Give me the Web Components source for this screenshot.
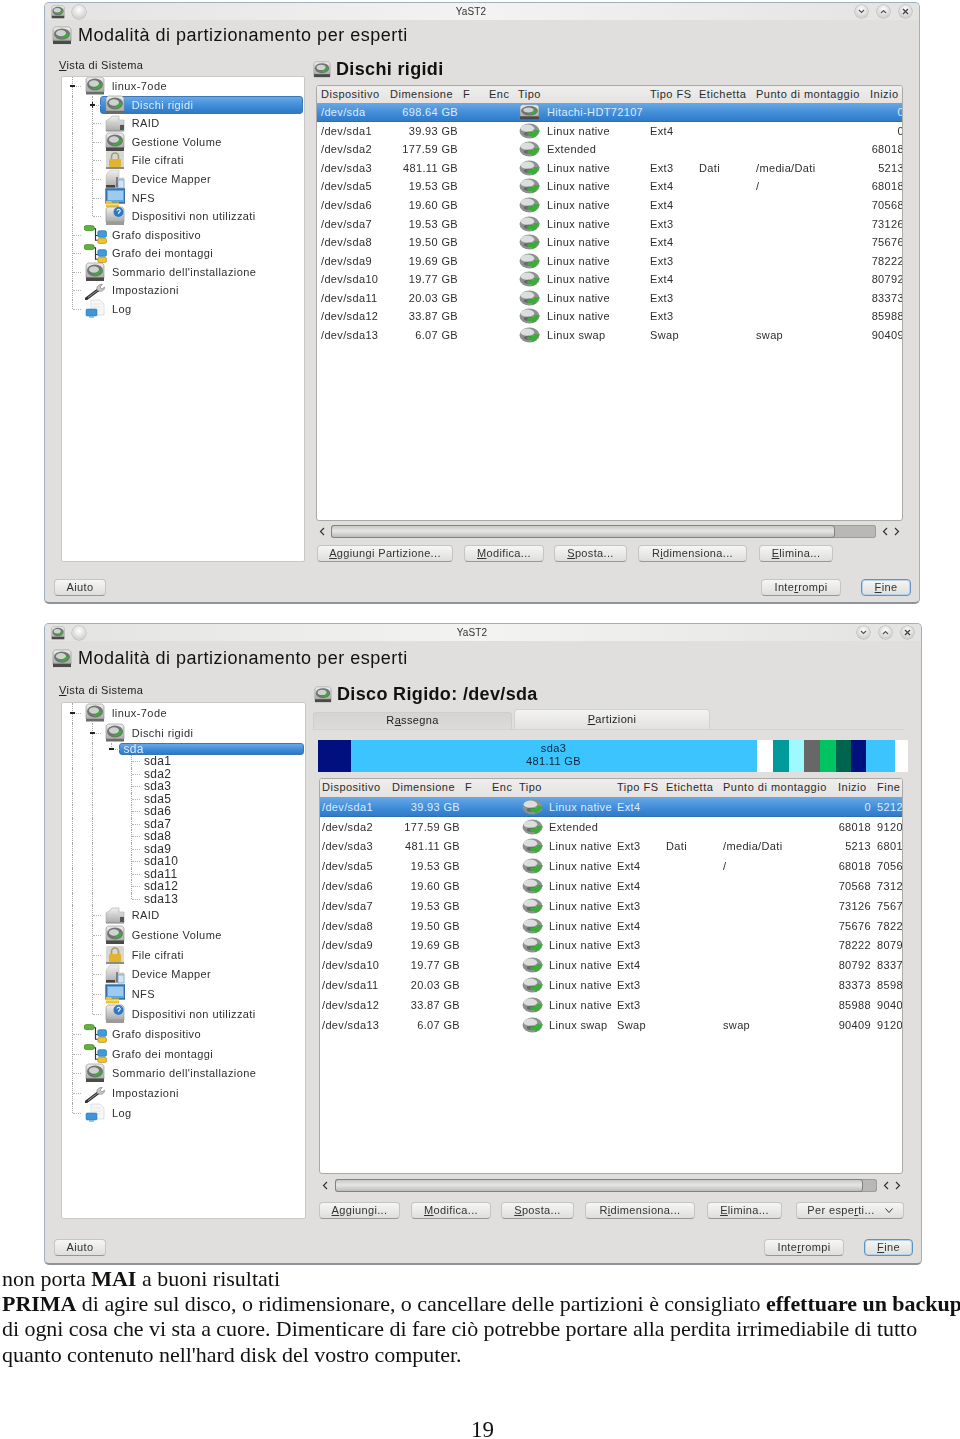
<!DOCTYPE html>
<html lang="it">
<head>
<meta charset="utf-8">
<title>YaST2</title>
<style>
html, body { margin: 0; background: #fff; overflow: hidden; }
doc-page { --ui: "Liberation Sans", Arial, sans-serif; }
.w1 { width: 876px; height: 602px; margin-top: 2px; }
.w2 { width: 878px; height: 642px; margin-top: 19px; }
</style>
</head>
<body>
<doc-page>
  <yast-window class="w1" title="Modalità di partizionamento per esperti" head-pad="2" label-pad="11" label-h="28" tree-w="244" gap="8" foot-pad="17">
    <yast-tree slot="tree" row="18.55">
      <tree-row toggle="minus" icon="disk">linux-7ode</tree-row>
      <tree-row guides="1" toggle="plus" icon="disk" selected>Dischi rigidi</tree-row>
      <tree-row guides="1" icon="raid">RAID</tree-row>
      <tree-row guides="1" icon="volume">Gestione Volume</tree-row>
      <tree-row guides="1" icon="lock">File cifrati</tree-row>
      <tree-row guides="1" icon="mapper">Device Mapper</tree-row>
      <tree-row guides="1" icon="nfs">NFS</tree-row>
      <tree-row guides="1" icon="unused" last>Dispositivi non utilizzati</tree-row>
      <tree-row icon="graph">Grafo dispositivo</tree-row>
      <tree-row icon="graph">Grafo dei montaggi</tree-row>
      <tree-row icon="volume">Sommario dell'installazione</tree-row>
      <tree-row icon="wrench">Impostazioni</tree-row>
      <tree-row icon="log" last>Log</tree-row>
    </yast-tree>
    <section-head style="height:37px;padding-bottom:4px">Dischi rigidi</section-head>
    <part-table source="disks" style="height:436px;margin-left:3px;width:587px"></part-table>
    <h-scroll thumb="504" track="545" lead="6" style="margin:3px 0 7px 3px;width:586px"></h-scroll>
    <div style="display:flex;margin-left:4px">
      <yast-btn style="width:136px"><u>A</u>ggiungi Partizione...</yast-btn>
      <yast-btn style="width:80px;margin-left:11px"><u>M</u>odifica...</yast-btn>
      <yast-btn style="width:73px;margin-left:10px"><u>S</u>posta...</yast-btn>
      <yast-btn style="width:109px;margin-left:11px">R<u>i</u>dimensiona...</yast-btn>
      <yast-btn style="width:74px;margin-left:12px"><u>E</u>limina...</yast-btn>
    </div>
    <yast-btn slot="help" style="width:52px">Aiuto</yast-btn>
    <yast-btn slot="actions" style="width:80px">Inte<u>r</u>rompi</yast-btn>
    <yast-btn slot="actions" primary style="width:50px"><u>F</u>ine</yast-btn>
  </yast-window>

  <yast-window class="w2" title="Modalità di partizionamento per esperti" head-pad="6" label-pad="15" label-h="33" tree-w="245" gap="7" foot-pad="20">
    <yast-tree slot="tree" row="19.8">
      <tree-row toggle="minus" icon="disk">linux-7ode</tree-row>
      <tree-row guides="1" toggle="minus" icon="disk">Dischi rigidi</tree-row>
      <tree-row guides="11" toggle="minus" plain selected h="12.5" last>sda</tree-row>
      <tree-row guides="110" plain h="12.5">sda1</tree-row>
      <tree-row guides="110" plain h="12.5">sda2</tree-row>
      <tree-row guides="110" plain h="12.5">sda3</tree-row>
      <tree-row guides="110" plain h="12.5">sda5</tree-row>
      <tree-row guides="110" plain h="12.5">sda6</tree-row>
      <tree-row guides="110" plain h="12.5">sda7</tree-row>
      <tree-row guides="110" plain h="12.5">sda8</tree-row>
      <tree-row guides="110" plain h="12.5">sda9</tree-row>
      <tree-row guides="110" plain h="12.5">sda10</tree-row>
      <tree-row guides="110" plain h="12.5">sda11</tree-row>
      <tree-row guides="110" plain h="12.5">sda12</tree-row>
      <tree-row guides="110" plain h="12.5" last>sda13</tree-row>
      <tree-row guides="1" icon="raid">RAID</tree-row>
      <tree-row guides="1" icon="volume">Gestione Volume</tree-row>
      <tree-row guides="1" icon="lock">File cifrati</tree-row>
      <tree-row guides="1" icon="mapper">Device Mapper</tree-row>
      <tree-row guides="1" icon="nfs">NFS</tree-row>
      <tree-row guides="1" icon="unused" last>Dispositivi non utilizzati</tree-row>
      <tree-row icon="graph">Grafo dispositivo</tree-row>
      <tree-row icon="graph">Grafo dei montaggi</tree-row>
      <tree-row icon="volume">Sommario dell'installazione</tree-row>
      <tree-row icon="wrench">Impostazioni</tree-row>
      <tree-row icon="log" last>Log</tree-row>
    </yast-tree>
    <section-head style="height:39px;margin:1px 0 0 1px;padding-bottom:3px">Disco Rigido: /dev/sda</section-head>
    <yast-tabs></yast-tabs>
    <disk-bar style="margin:10px 0 6px 5px"></disk-bar>
    <part-table source="partitions" style="height:396px;margin-left:6px;width:584px"></part-table>
    <h-scroll thumb="528" track="542" lead="7" style="margin:4px 0 10px 6px;width:584px"></h-scroll>
    <div style="display:flex;margin-left:6px">
      <yast-btn style="width:81px"><u>A</u>ggiungi...</yast-btn>
      <yast-btn style="width:80px;margin-left:11px"><u>M</u>odifica...</yast-btn>
      <yast-btn style="width:73px;margin-left:10px"><u>S</u>posta...</yast-btn>
      <yast-btn style="width:110px;margin-left:11px">R<u>i</u>dimensiona...</yast-btn>
      <yast-btn style="width:75px;margin-left:12px"><u>E</u>limina...</yast-btn>
      <yast-btn style="width:108px;margin-left:14px">Per espe<u>r</u>ti...<svg style="margin-left:10px" width="8" height="5" viewBox="0 0 8 5"><path d="M.5 .5L4 4.500 7.500 .5" fill="none" stroke="#333" stroke-width="1"/></svg></yast-btn>
    </div>
    <yast-btn slot="help" style="width:52px">Aiuto</yast-btn>
    <yast-btn slot="actions" style="width:80px">Inte<u>r</u>rompi</yast-btn>
    <yast-btn slot="actions" primary style="width:49px"><u>F</u>ine</yast-btn>
  </yast-window>

  <doc-text page="19">
    <div>non porta <b>MAI</b> a buoni risultati</div>
    <div style="letter-spacing:-.03px"><b>PRIMA</b> di agire sul disco, o ridimensionare, o cancellare delle partizioni è consigliato <b>effettuare un backup</b></div>
    <div style="letter-spacing:-.05px">di ogni cosa che vi sta a cuore. Dimenticare di fare ciò potrebbe portare alla perdita irrimediabile di tutto</div>
    <div style="letter-spacing:-.04px">quanto contenuto nell'hard disk del vostro computer.</div>
  </doc-text>
</doc-page>

<script>
const silver = `<linearGradient id="s" x1="0" y1="0" x2="0" y2="1"><stop offset="0" stop-color="#f0f0ee"/><stop offset="1" stop-color="#a9aaa8"/></linearGradient>`;
const swirl = `<ellipse cx="10" cy="8.5" rx="8" ry="6" fill="#6f7572"/><ellipse cx="9" cy="7.5" rx="5" ry="3.2" fill="#cfd3d0"/><path d="M7 13c5 1 9-1 10.500-5.500l-3.500 .8-2.500 3z" fill="#38b036"/>`;
const driveBody = `<path d="M3 1h14l2 2v13H1V3z" fill="url(#s)" stroke="#8b8c8a" stroke-width=".6"/>`;
const base = `<rect x="1" y="15.5" width="18" height="3.5" fill="#4a4b49"/>`;

const ICONS = {
  disk: driveBody + swirl + `<rect x="1" y="16" width="18" height="2.5" fill="#6a6b69"/>`,
  volume: driveBody + swirl + base,
  raid: `<path d="M4 6l3-3h7v4h5v11H1V8z" fill="url(#s)" stroke="#999" stroke-width=".5"/><rect x="3" y="9" width="11" height="1" fill="#ccc"/><rect x="15" y="12" width="4" height="5" fill="#55585a"/><rect x="1" y="17" width="18" height="1.5" fill="#9a9a98"/>`,
  lock: `<rect x="1" y="1" width="18" height="18" rx="1.5" fill="#d8d8d2"/><path d="M6.500 9V6.500a3.500 3.500 0 0 1 7 0V9" fill="none" stroke="#a59a72" stroke-width="1.6"/><rect x="4" y="9" width="12" height="8" rx="1" fill="#e3b32f"/><rect x="1" y="17" width="18" height="2" fill="#8b8b86"/>`,
  mapper: `<path d="M5 1h9v8h5v10H1V6z" fill="url(#s)" stroke="#aaa" stroke-width=".4"/><rect x="1" y="16" width="9" height="2.5" fill="#444"/><path d="M12 8v10" stroke="#333" stroke-width="1"/><rect x="13" y="11" width="6" height="8" fill="#cfe4f6" stroke="#6fa3cf" stroke-width=".7"/>`,
  nfs: `<rect x="1" y="1" width="19" height="14" fill="#5ea6df" stroke="#1f4f86" stroke-width="1.2"/><rect x="3" y="3" width="15" height="9" fill="#9ccbef"/><path d="M1 13h5l1 1.500h7v5H1z" fill="#efc42e"/><rect x="1" y="16" width="13" height="1" fill="#f9de76"/>`,
  unused: driveBody + `<rect x="1" y="16" width="18" height="3" fill="#9b9c9a"/><circle cx="13.5" cy="6" r="5" fill="#2f78c4"/><path d="M12 4.800a1.600 1.600 0 1 1 2.200 1.500l-.6 .6v.8" fill="none" stroke="#fff" stroke-width="1.1"/>`,
  graph: `<path d="M6 4h4v7h2M10 11v5h2" fill="none" stroke="#333" stroke-width="1"/><rect x="0" y="0.5" width="9" height="5.5" rx="2.500" fill="#62b33d" stroke="#3a7e20" stroke-width=".6"/><rect x="12" y="6" width="7.500" height="7" rx="1.500" fill="#3f9bdc" stroke="#1a6aa6" stroke-width=".6"/><rect x="12" y="14" width="7.500" height="5.500" rx="1.500" fill="#edc32f" stroke="#a8861a" stroke-width=".6"/>`,
  wrench: `<path d="M1 19l12-9" stroke="#333" stroke-width="3" stroke-linecap="round"/><path d="M3 17.500l10-7.500" stroke="#999" stroke-width="1"/><path d="M12 10c-1-3 1.500-6 5.500-5.500l-2.500 2.500 2 2 2.500-2c.3 3.500-3.500 6-7.500 3z" fill="#c6c7c6" stroke="#666" stroke-width=".5"/>`,
  log: `<path d="M6 1h9l4 4v11H6z" fill="#f6f7f8" stroke="#c9ccd0" stroke-width=".6"/><path d="M8 5h8M8 8h8M8 11h8" stroke="#dfe2e6" stroke-width=".8"/><rect x="1" y="10" width="11" height="7" rx="1" fill="#3e95dc" stroke="#2b6ea8" stroke-width=".5"/><rect x="4" y="17" width="5" height="1.8" fill="#7cb8e6"/>`,
  part: `<ellipse cx="10" cy="10" rx="9.500" ry="9.500" fill="#8d918f"/><ellipse cx="8" cy="6.500" rx="6.500" ry="4.500" fill="#dcdedd"/><ellipse cx="9" cy="13.500" rx="4.500" ry="2.500" fill="#666a68"/><path d="M8 12h6V9h6l-4 7-3 3-1-3H8z" fill="#35b030"/>`
};

class YastIcon extends HTMLElement {
  connectedCallback() {
    const size = this.getAttribute('size') || 20;
    const height = this.getAttribute('height') || size;
    const name = this.getAttribute('name');
    this.attachShadow({ mode: 'open' }).innerHTML = `
      <style>:host { display: inline-flex; flex: none; } svg { display: block; }</style>
      <svg width="${size}" height="${height}" viewBox="0 0 20 20" preserveAspectRatio="none"><defs>${silver}</defs>${ICONS[name]}</svg>`;
  }
}
customElements.define('yast-icon', YastIcon);

class DocPage extends HTMLElement {
  constructor() {
    super();
    this.attachShadow({ mode: 'open' }).innerHTML = `
      <style>:host { display: flex; flex-direction: column; height: 1439px; padding-left: 44px; box-sizing: border-box; }</style>
      <slot></slot>`;
  }
}
customElements.define('doc-page', DocPage);

class YastWindow extends HTMLElement {
  connectedCallback() {
    const pad = this.getAttribute('label-pad');
    const labelH = this.getAttribute('label-h');
    const treeW = this.getAttribute('tree-w');
    this.attachShadow({ mode: 'open' }).innerHTML = `
      <style>
      :host {
        display: flex; flex-direction: column; box-sizing: border-box; flex: none;
        background: #e0dfde; border: 1px solid #9fb0c2; border-bottom: 2px solid #8f9498;
        border-radius: 5px; font: 11px var(--ui); color: #222; letter-spacing: .35px;
        filter: blur(.45px); overflow: hidden;
      }
      .bar {
        height: 17px; display: flex; align-items: center; flex: none; position: relative; padding: 0 6px;
        background: linear-gradient(90deg, #e3e3e2, #f3f3f2 50%, #e3e3e2);
      }
      .bar .name { position: absolute; left: 0; right: 22px; text-align: center; font-size: 10px; letter-spacing: .1px; color: #333; }
      .dot {
        width: 13px; height: 13px; border-radius: 50%; flex: none; position: relative;
        background: radial-gradient(circle at 50% 35%, #fff, #cfcfce 75%, #b6b6b5);
        box-shadow: 0 0 0 .5px #aaa;
        display: flex; align-items: center; justify-content: center;
      }
      .dot svg { display: block; }
      .right { margin-left: auto; display: flex; gap: 9px; padding-right: 1px; }
      .heading { height: 28px; box-sizing: border-box; padding: ${this.getAttribute('head-pad')}px 0 0 7px; flex: none; display: flex; align-items: center; gap: 6px; font-size: 18px; letter-spacing: .5px; color: #111; }
      .main { flex: none; display: flex; padding-left: 16px; gap: ${this.getAttribute('gap')}px; }
      .left { width: ${treeW}px; flex: none; display: flex; flex-direction: column; }
      .label { height: ${labelH - pad}px; padding-top: ${pad}px; margin-left: -2px; flex: none; }
      .content { flex: 1; min-width: 0; display: flex; flex-direction: column; padding-right: 17px; }
      .foot { display: flex; justify-content: space-between; padding: ${this.getAttribute('foot-pad')}px 8px 0 9px; }
      .actions { display: flex; gap: 20px; }
      </style>
      <div class="bar">
        <yast-icon name="volume" size="14"></yast-icon>
        <span class="dot" style="margin-left:7px;width:14px;height:14px"></span>
        <span class="name">YaST2</span>
        <div class="right">
          <span class="dot"><svg width="7" height="5" viewBox="0 0 7 5"><path d="M1 1l2.500 2.500L6 1" fill="none" stroke="#555" stroke-width="1.2"/></svg></span>
          <span class="dot"><svg width="7" height="5" viewBox="0 0 7 5"><path d="M1 4l2.500-2.500L6 4" fill="none" stroke="#555" stroke-width="1.2"/></svg></span>
          <span class="dot"><svg width="7" height="7" viewBox="0 0 7 7"><path d="M1 1l5 5M6 1l-5 5" fill="none" stroke="#444" stroke-width="1.4"/></svg></span>
        </div>
      </div>
      <div class="heading"><yast-icon name="volume" size="20" height="19"></yast-icon><span>${this.getAttribute('title')}</span></div>
      <div class="main">
        <div class="left">
          <div class="label"><u>V</u>ista di Sistema</div>
          <slot name="tree"></slot>
        </div>
        <div class="content"><slot></slot></div>
      </div>
      <div class="foot">
        <slot name="help"></slot>
        <div class="actions"><slot name="actions"></slot></div>
      </div>`;
  }
}
customElements.define('yast-window', YastWindow);

class YastTree extends HTMLElement {
  connectedCallback() {
    this.style.setProperty('--row', this.getAttribute('row') + 'px');
    this.attachShadow({ mode: 'open' }).innerHTML = `
      <style>
      :host { display: block; flex: 1; background: #fff; border: 1px solid #c9c8c6; border-radius: 2px; box-sizing: border-box; padding-left: 10px; overflow: hidden; letter-spacing: .42px; }
      </style>
      <slot></slot>`;
  }
}
customElements.define('yast-tree', YastTree);

class TreeRow extends HTMLElement {
  connectedCallback() {
    const guides = this.getAttribute('guides') || '';
    const toggle = this.getAttribute('toggle');
    const icon = this.getAttribute('icon');
    const h = this.getAttribute('h');
    const plain = this.hasAttribute('plain');
    const selected = this.hasAttribute('selected');
    const cells = [...guides].map(g => `<span class="cell ${g === '1' ? 'line' : ''}"></span>`).join('');
    const iconTag = icon === 'graph'
      ? `<yast-icon name="graph" size="23" height="19" style="margin:0 -2px 0 -1px"></yast-icon>`
      : icon ? `<yast-icon name="${icon}"></yast-icon>` : '';
    this.attachShadow({ mode: 'open' }).innerHTML = `
      <style>
      :host { display: flex; align-items: stretch; height: ${h ? h + 'px' : 'var(--row)'}; }
      .cell { width: 19.7px; flex: none; box-sizing: border-box; }
      .line { border-left: 1px dotted #a5a5a5; }
      .own { width: 9px; flex: none; position: relative; }
      .own::before { content: ""; position: absolute; left: 0; top: 0; height: ${this.hasAttribute('last') ? '50%' : '100%'}; border-left: 1px dotted #a5a5a5; }
      .own::after { content: ""; position: absolute; left: 1px; right: 0; top: 50%; border-top: 1px dotted #b5b5b5; }
      .tg { position: absolute; z-index: 1; left: -2px; top: 50%; width: 5px; height: 2px; margin-top: -1px; background: #222; }
      .tg.plus::after { content: ""; position: absolute; left: 2px; top: -2px; width: 1px; height: 6px; background: #222; }
      .item { flex: 1; min-width: 0; display: flex; align-items: center; padding-left: ${plain && selected ? 3 : 4}px; gap: 7px; white-space: nowrap; color: #2e2e2e; margin-right: 1px; }
      :host([plain]) .item { font-size: 12px; letter-spacing: .3px; line-height: 1; }
      :host([selected]) .item {
        color: #dcecfb; border-radius: 3px; border: 1px solid #3a78b8; margin-left: -1px; box-sizing: border-box;
        background: linear-gradient(#6aa8e4, #3f8cd9 55%, #2f78c6);
      }
      </style>
      ${cells}
      <span class="own">${toggle ? `<span class="tg ${toggle}"></span>` : ''}</span>
      <div class="item">${iconTag}<span><slot></slot></span></div>`;
  }
}
customElements.define('tree-row', TreeRow);

class SectionHead extends HTMLElement {
  constructor() {
    super();
    this.attachShadow({ mode: 'open' }).innerHTML = `
      <style>
      :host { display: flex; align-items: flex-end; box-sizing: border-box; flex: none; font: bold 18px var(--ui); letter-spacing: .35px; color: #111; }
      .in { display: flex; align-items: center; gap: 5px; height: 24px; }
      </style>
      <div class="in"><yast-icon name="volume" size="18" height="17"></yast-icon><span><slot></slot></span></div>`;
  }
}
customElements.define('section-head', SectionHead);

class YastTabs extends HTMLElement {
  constructor() {
    super();
    this.attachShadow({ mode: 'open' }).innerHTML = `
      <style>
      :host { display: flex; height: 20px; align-items: flex-end; flex: none; border-bottom: 1px solid #d3d2d1; }
      .tab { display: flex; align-items: center; justify-content: center; box-sizing: border-box; padding-bottom: 1px; }
      .off { width: 199px; height: 17px; padding-bottom: 3px; background: linear-gradient(#d5d4d3, #dcdbda); border: 1px solid #cfcecd; border-bottom: none; border-radius: 3px 3px 0 0; margin-right: 2px; }
      .on { width: 196px; height: 20px; background: linear-gradient(#f3f3f2, #e2e1e0); border: 1px solid #d2d1d0; border-bottom: none; border-radius: 4px 4px 0 0; }
      </style>
      <div class="tab off">R<u>a</u>ssegna</div>
      <div class="tab on"><u>P</u>artizioni</div>`;
  }
}
customElements.define('yast-tabs', YastTabs);

const SEGMENTS = [
  [32.5, '#00107f'], [406, '#3cc4ff', 'sda3', '481.11 GB'], [16, '#fff'], [16, '#009a9a'], [15.5, '#9ffaff'],
  [15.5, '#676767'], [16.5, '#00c462'], [15, '#00654f'], [15, '#00107f'], [28.5, '#3cc4ff'], [13.5, '#fff']
];

class DiskBar extends HTMLElement {
  connectedCallback() {
    const segs = SEGMENTS.map(([w, c, a, b]) =>
      `<div style="flex:0 0 ${w}px;background:${c}">${a ? `${a}<br>${b}` : ''}</div>`).join('');
    this.attachShadow({ mode: 'open' }).innerHTML = `
      <style>
      :host { display: flex; height: 32px; flex: none; }
      div { box-sizing: border-box; padding-top: 2px; text-align: center; line-height: 13px; color: #123; }
      </style>${segs}`;
  }
}
customElements.define('disk-bar', DiskBar);

const TABLES = {
  disks: {
    cols: '69px 73px 26px 29px 132px 49px 57px 114px 38px',
    pad: 4, rowH: 18.55, headH: 17, tipoPad: 1, textGap: 7, sizePad: 5, endPad: 4,
    head: ['Dispositivo', 'Dimensione', 'F', 'Enc', 'Tipo', 'Tipo FS', 'Etichetta', 'Punto di montaggio', 'Inizio'],
    rows: [
      ['/dev/sda', '698.64 GB', '', '', 'Hitachi-HDT72107', '', '', '', '0'],
      ['/dev/sda1', '39.93 GB', '', '', 'Linux native', 'Ext4', '', '', '0'],
      ['/dev/sda2', '177.59 GB', '', '', 'Extended', '', '', '', '68018'],
      ['/dev/sda3', '481.11 GB', '', '', 'Linux native', 'Ext3', 'Dati', '/media/Dati', '5213'],
      ['/dev/sda5', '19.53 GB', '', '', 'Linux native', 'Ext4', '', '/', '68018'],
      ['/dev/sda6', '19.60 GB', '', '', 'Linux native', 'Ext4', '', '', '70568'],
      ['/dev/sda7', '19.53 GB', '', '', 'Linux native', 'Ext3', '', '', '73126'],
      ['/dev/sda8', '19.50 GB', '', '', 'Linux native', 'Ext4', '', '', '75676'],
      ['/dev/sda9', '19.69 GB', '', '', 'Linux native', 'Ext3', '', '', '78222'],
      ['/dev/sda10', '19.77 GB', '', '', 'Linux native', 'Ext4', '', '', '80792'],
      ['/dev/sda11', '20.03 GB', '', '', 'Linux native', 'Ext3', '', '', '83373'],
      ['/dev/sda12', '33.87 GB', '', '', 'Linux native', 'Ext3', '', '', '85988'],
      ['/dev/sda13', '6.07 GB', '', '', 'Linux swap', 'Swap', '', 'swap', '90409']
    ]
  },
  partitions: {
    cols: '70px 73px 27px 27px 98px 49px 57px 115px 39px 40px',
    pad: 2, rowH: 19.8, headH: 18, tipoPad: 3, textGap: 6, sizePad: 5, endPad: 6,
    head: ['Dispositivo', 'Dimensione', 'F', 'Enc', 'Tipo', 'Tipo FS', 'Etichetta', 'Punto di montaggio', 'Inizio', 'Fine'],
    rows: [
      ['/dev/sda1', '39.93 GB', '', '', 'Linux native', 'Ext4', '', '', '0', '5212'],
      ['/dev/sda2', '177.59 GB', '', '', 'Extended', '', '', '', '68018', '91200'],
      ['/dev/sda3', '481.11 GB', '', '', 'Linux native', 'Ext3', 'Dati', '/media/Dati', '5213', '68017'],
      ['/dev/sda5', '19.53 GB', '', '', 'Linux native', 'Ext4', '', '/', '68018', '70567'],
      ['/dev/sda6', '19.60 GB', '', '', 'Linux native', 'Ext4', '', '', '70568', '73125'],
      ['/dev/sda7', '19.53 GB', '', '', 'Linux native', 'Ext3', '', '', '73126', '75675'],
      ['/dev/sda8', '19.50 GB', '', '', 'Linux native', 'Ext4', '', '', '75676', '78221'],
      ['/dev/sda9', '19.69 GB', '', '', 'Linux native', 'Ext3', '', '', '78222', '80791'],
      ['/dev/sda10', '19.77 GB', '', '', 'Linux native', 'Ext4', '', '', '80792', '83372'],
      ['/dev/sda11', '20.03 GB', '', '', 'Linux native', 'Ext3', '', '', '83373', '85987'],
      ['/dev/sda12', '33.87 GB', '', '', 'Linux native', 'Ext3', '', '', '85988', '90408'],
      ['/dev/sda13', '6.07 GB', '', '', 'Linux swap', 'Swap', '', 'swap', '90409', '91200']
    ]
  }
};

class PartTable extends HTMLElement {
  connectedCallback() {
    const t = TABLES[this.getAttribute('source')];
    const cell = (v, i) => {
      if (i === 4) return `<span class="c tipo"><yast-icon name="${v.startsWith('Hitachi') ? 'volume' : 'part'}" size="21" height="16"></yast-icon>${v}</span>`;
      if (i === 1 || i === 8) return `<span class="c num" style="padding-right:${i === 1 ? t.sizePad : t.endPad}px">${v}</span>`;
      return `<span class="c">${v}</span>`;
    };
    const rows = t.rows.map((r, n) => `<div class="row ${n === 0 ? 'sel' : ''}">${r.map(cell).join('')}</div>`).join('');
    this.attachShadow({ mode: 'open' }).innerHTML = `
      <style>
      :host { display: block; flex: none; background: #fff; border: 1px solid #a9a9a8; border-radius: 3px; box-sizing: border-box; overflow: hidden; }
      .row, .head { display: grid; grid-template-columns: ${t.cols}; padding-left: ${t.pad}px; align-items: center; white-space: nowrap; }
      .head { height: ${t.headH}px; box-sizing: border-box; padding-bottom: 2px; background: linear-gradient(#eeeeed, #e4e3e2); color: #2b2b2b; letter-spacing: .5px; }
      .row { height: ${t.rowH}px; color: #2e2e2e; }
      .sel { color: #dcecfb; background: linear-gradient(#6aa8e4, #3f8cd9 55%, #2f78c6); box-shadow: inset 0 -1px #2c6fb5; }
      .c { overflow: hidden; min-width: 0; }
      .num { text-align: right; }
      .tipo { display: flex; align-items: center; gap: ${t.textGap}px; overflow: visible; padding-left: ${t.tipoPad}px; }
      </style>
      <div class="head">${t.head.map(h => `<span class="c" style="overflow:visible">${h}</span>`).join('')}</div>
      ${rows}`;
  }
}
customElements.define('part-table', PartTable);

class HScroll extends HTMLElement {
  connectedCallback() {
    const thumb = this.getAttribute('thumb');
    this.attachShadow({ mode: 'open' }).innerHTML = `
      <style>
      :host { display: flex; height: 14px; align-items: center; flex: none; box-sizing: border-box; }
      svg { display: block; flex: none; }
      .track { width: ${this.getAttribute('track')}px; height: 13px; margin-left: ${this.getAttribute('lead')}px; background: #b9b8b7; border-radius: 3px; overflow: hidden; box-shadow: inset 0 0 0 1px #9d9c9b; }
      .thumb { height: 100%; width: ${thumb}px; box-sizing: border-box; border: 1px solid #828282; border-radius: 3px; background: linear-gradient(#c9c9c8, #e6e6e5 45%, #bdbdbc); }
      </style>
      <svg style="margin-left:3px" width="6" height="9" viewBox="0 0 6 9"><path d="M5 1L1.500 4.500 5 8" fill="none" stroke="#333" stroke-width="1.2"/></svg>
      <div class="track"><div class="thumb"></div></div>
      <svg style="margin-left:6px" width="6" height="9" viewBox="0 0 6 9"><path d="M5 1L1.500 4.500 5 8" fill="none" stroke="#333" stroke-width="1.2"/></svg>
      <svg style="margin-left:6px" width="6" height="9" viewBox="0 0 6 9"><path d="M1 1l3.500 3.500L1 8" fill="none" stroke="#333" stroke-width="1.2"/></svg>`;
  }
}
customElements.define('h-scroll', HScroll);

class YastBtn extends HTMLElement {
  constructor() {
    super();
    this.attachShadow({ mode: 'open' }).innerHTML = `
      <style>
      :host {
        display: inline-flex; align-items: center; justify-content: center; height: 17px; box-sizing: border-box; flex: none; padding-bottom: 1px;
        background: linear-gradient(#f6f6f5, #dededd); border: 1px solid #c6c5c4; border-bottom-color: #989796;
        border-radius: 4px; white-space: nowrap; color: #333;
      }
      :host([primary]) { border: 1px solid #5f93c4; box-shadow: inset 0 0 0 1px #b8d2ea; }
      </style>
      <slot></slot>`;
  }
}
customElements.define('yast-btn', YastBtn);

class DocText extends HTMLElement {
  connectedCallback() {
    this.attachShadow({ mode: 'open' }).innerHTML = `
      <style>
      :host { display: block; margin-left: -42px; padding-top: 1px; font: 22px/25.2px "Liberation Serif", "Times New Roman", serif; color: #111; white-space: nowrap; position: relative; flex: 1; }
      .num { position: absolute; left: 469px; top: 152px; font-size: 23px; }
      </style>
      <slot></slot>
      <div class="num">${this.getAttribute('page')}</div>`;
  }
}
customElements.define('doc-text', DocText);
</script>
</body>
</html>
